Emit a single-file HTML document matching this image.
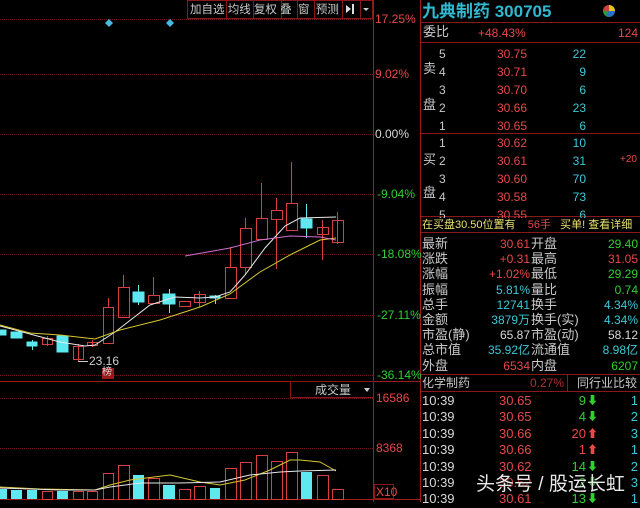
<!DOCTYPE html>
<html><head><meta charset="utf-8"><style>
*{margin:0;padding:0;box-sizing:border-box}
body{width:640px;height:502px;background:#000;overflow:hidden;position:relative;font-family:"Liberation Sans","Noto Sans CJK SC",sans-serif;font-size:12px;color:#c8c8c8}
.a{position:absolute;white-space:nowrap;line-height:14px}
.r{color:#e84848}.c{color:#3cc8d8}.g{color:#30d030}.w{color:#d8d8d8}.y{color:#e8e070}
.rt{text-align:right}
.hl{position:absolute;height:1px;background:#8a1818}
.vl{position:absolute;width:1px;background:#8a1818}
</style></head><body>
<svg width="640" height="502" style="position:absolute;left:0;top:0">
<g stroke="#6a1414" stroke-dasharray="1,1">
<line x1="0" y1="19.5" x2="373" y2="19.5"/><line x1="0" y1="74.5" x2="373" y2="74.5"/><line x1="0" y1="134.5" x2="373" y2="134.5"/><line x1="0" y1="194.5" x2="373" y2="194.5"/><line x1="0" y1="254.5" x2="373" y2="254.5"/><line x1="0" y1="315.5" x2="373" y2="315.5"/><line x1="0" y1="375.5" x2="373" y2="375.5"/><line x1="0" y1="398.5" x2="373" y2="398.5"/><line x1="0" y1="448.5" x2="373" y2="448.5"/>
</g>
<line x1="373.5" y1="0" x2="373.5" y2="502" stroke="#a01c1c"/>
<line x1="0" y1="381.5" x2="420" y2="381.5" stroke="#a01c1c"/>
<line x1="0" y1="499.5" x2="420" y2="499.5" stroke="#a01c1c"/>
<line x1="420.5" y1="0" x2="420.5" y2="502" stroke="#a01c1c"/>
<polygon points="109,19 113,23 109,27 105,23" fill="#4ab8e0"/>
<polygon points="170,19 174,23 170,27 166,23" fill="#4ab8e0"/>
<g stroke="#d84040" fill="none">
<line x1="47.5" y1="336" x2="47.5" y2="346"/><rect x="42.5" y="338.5" width="10" height="6"/>
<line x1="78.5" y1="344" x2="78.5" y2="361"/><rect x="73.5" y="346.5" width="10" height="13"/>
<line x1="92.5" y1="340" x2="92.5" y2="347"/><rect x="87.5" y="342.5" width="10" height="3"/>
<line x1="108.5" y1="298" x2="108.5" y2="307"/><rect x="103.5" y="307.5" width="10" height="36"/>
<line x1="123.5" y1="275" x2="123.5" y2="287"/><rect x="118.5" y="287.5" width="11" height="30"/>
<line x1="153.5" y1="277" x2="153.5" y2="295"/><rect x="148.5" y="295.5" width="11" height="8"/>
<rect x="179.5" y="301.5" width="11" height="5"/>
<line x1="199.5" y1="291" x2="199.5" y2="307"/><rect x="194.5" y="294.5" width="11" height="8"/>
<line x1="230.5" y1="247" x2="230.5" y2="267"/><rect x="225.5" y="267.5" width="11" height="31"/>
<line x1="245.5" y1="218" x2="245.5" y2="228"/><line x1="245.5" y1="267" x2="245.5" y2="275"/><rect x="240.5" y="228.5" width="11" height="39"/>
<line x1="261.5" y1="183" x2="261.5" y2="218"/><rect x="256.5" y="218.5" width="11" height="21"/>
<line x1="276.5" y1="198" x2="276.5" y2="210"/><line x1="276.5" y1="219" x2="276.5" y2="269"/><rect x="271.5" y="210.5" width="11" height="9"/>
<line x1="291.5" y1="162" x2="291.5" y2="203"/><rect x="286.5" y="203.5" width="11" height="27"/>
<line x1="322.5" y1="220" x2="322.5" y2="260"/><rect x="317.5" y="227.5" width="11" height="7"/>
<line x1="337.5" y1="212" x2="337.5" y2="244"/><rect x="332.5" y="220.5" width="11" height="22"/>
</g>
<g fill="#5ee8f0" stroke="#5ee8f0">
<rect x="0" y="330" width="6" height="5"/>
<rect x="11" y="332" width="11" height="6"/>
<line x1="32.5" y1="340" x2="32.5" y2="350"/><rect x="27" y="342" width="10" height="4"/>
<rect x="57" y="336" width="11" height="16"/>
<line x1="138.5" y1="285" x2="138.5" y2="305"/><rect x="133" y="292" width="11" height="10"/>
<line x1="169.5" y1="289" x2="169.5" y2="313"/><rect x="163" y="294" width="12" height="10"/>
<line x1="215.5" y1="295" x2="215.5" y2="304"/><rect x="210" y="296" width="10" height="2"/>
<line x1="306.5" y1="204" x2="306.5" y2="238"/><rect x="301" y="219" width="11" height="9"/>
</g>
<polyline fill="none" stroke="#e8e8e8" points="0,326 30,334 60,342 85,346 95,345 115,332 150,305 175,297 200,298 215,297 230,292 245,275 265,248 285,226 300,218 336,217"/>
<polyline fill="none" stroke="#d8c830" points="0,325 30,333 60,335 95,339 120,330 160,320 200,307 230,294 260,272 290,255 320,240 336,238"/>
<polyline fill="none" stroke="#d070d0" points="185,256 230,248 260,240 290,236 320,237 336,240"/>
<line x1="78" y1="361.5" x2="88" y2="361.5" stroke="#ccc"/>
<rect x="102" y="368" width="12" height="11" fill="#9a1818"/>
<g stroke="#d84040" fill="none">
<rect x="42.5" y="491.5" width="10" height="8"/><rect x="73.5" y="491.5" width="10" height="8"/><rect x="87.5" y="491.5" width="10" height="8"/><rect x="103.5" y="473.5" width="10" height="26"/><rect x="118.5" y="465.5" width="11" height="34"/><rect x="148.5" y="478.5" width="11" height="21"/><rect x="179.5" y="489.5" width="11" height="10"/><rect x="194.5" y="486.5" width="11" height="13"/><rect x="225.5" y="468.5" width="11" height="31"/><rect x="240.5" y="462.5" width="11" height="37"/><rect x="256.5" y="455.5" width="11" height="44"/><rect x="271.5" y="461.5" width="11" height="38"/><rect x="286.5" y="452.5" width="11" height="47"/><rect x="317.5" y="475.5" width="11" height="24"/><rect x="332.5" y="489.5" width="11" height="10"/>
</g>
<g fill="#5ee8f0">
<rect x="0" y="489" width="7" height="10"/><rect x="11" y="490" width="11" height="9"/><rect x="27" y="490" width="10" height="9"/><rect x="57" y="491" width="11" height="8"/><rect x="133" y="475" width="11" height="24"/><rect x="163" y="485" width="12" height="14"/><rect x="210" y="488" width="10" height="11"/><rect x="301" y="472" width="11" height="27"/>
</g>
<polyline fill="none" stroke="#d8c830" points="0,487 40,489 95,490 110,485 130,480 170,475 200,482 220,485 245,480 270,470 290,460 300,460 320,462 336,471"/>
<polyline fill="none" stroke="#e8e8e8" points="0,488 60,490 95,490 110,487 140,483 180,483 220,482 250,475 280,472 300,471 336,470"/>
<rect x="290.5" y="381.5" width="83" height="16" fill="none" stroke="#8a1818"/>
<polygon points="364,388 370,388 367,392" fill="#ccc"/>
<rect x="187.5" y="0.5" width="185" height="18" fill="none" stroke="#8a1818"/>
<g stroke="#8a1818"><line x1="226.5" y1="0" x2="226.5" y2="18"/><line x1="253.5" y1="0" x2="253.5" y2="18"/><line x1="281.5" y1="0" x2="281.5" y2="18"/><line x1="297.5" y1="0" x2="297.5" y2="18"/><line x1="314.5" y1="0" x2="314.5" y2="18"/><line x1="342.5" y1="0" x2="342.5" y2="18"/><line x1="360.5" y1="0" x2="360.5" y2="18"/></g>
<polygon points="346,5 351,9 346,13" fill="#ddd"/><rect x="352" y="4" width="2" height="10" fill="#ddd"/>
<polygon points="363,8 369,8 366,11" fill="#ccc"/>
<rect x="374.5" y="484.5" width="19" height="14" fill="none" stroke="#8a1818"/>
<!-- right panel lines -->
<g stroke="#8a1818">
<line x1="421" y1="22.5" x2="640" y2="22.5"/><line x1="421" y1="42.5" x2="640" y2="42.5"/><line x1="421" y1="133.5" x2="640" y2="133.5"/><line x1="421" y1="216.5" x2="640" y2="216.5"/><line x1="421" y1="232.5" x2="640" y2="232.5"/><line x1="421" y1="374.5" x2="640" y2="374.5"/><line x1="421" y1="391.5" x2="640" y2="391.5"/><line x1="567.5" y1="374" x2="567.5" y2="391"/>
</g>
<circle cx="609" cy="11" r="6" fill="#2a9a3a"/><path d="M609,11 L609,5 A6,6 0 0 1 615,11 Z" fill="#e8c020"/><path d="M609,11 L615,11 A6,6 0 0 1 606,16 Z" fill="#2a70d0"/><path d="M609,11 L603,11 A6,6 0 0 1 609,5Z" fill="#d04040"/>
</svg>

<div class="a" style="left:190px;top:3px;font-size:11.5px;word-spacing:0">加自选&nbsp;均线&nbsp;复权&nbsp;叠&nbsp;&nbsp;窗&nbsp;&nbsp;预测</div>
<div class="a r" style="left:375px;top:12px">17.25%</div>
<div class="a r" style="left:375px;top:67px">9.02%</div>
<div class="a w" style="left:375px;top:127px">0.00%</div>
<div class="a g" style="left:377px;top:187px">-9.04%</div>
<div class="a g" style="left:377px;top:247px">-18.08%</div>
<div class="a g" style="left:377px;top:308px">-27.11%</div>
<div class="a g" style="left:377px;top:368px">-36.14%</div>
<div class="a r" style="left:376px;top:391px">16586</div>
<div class="a r" style="left:376px;top:441px">8368</div>
<div class="a r" style="left:376px;top:485px">X10</div>
<div class="a" style="left:315px;top:383px">成交量</div>
<div class="a" style="left:89px;top:354px;color:#ccc">23.16</div>
<div class="a w" style="left:102px;top:366px;font-size:10px">榜</div>

<div class="a c" style="left:422px;top:2px;font-size:17px;line-height:19px;font-weight:bold;color:#30b8d0">九典制药 300705</div>
<div class="a" style="left:423px;top:25px;font-size:13px">委比</div>
<div class="a r" style="left:478px;top:26px">+48.43%</div>
<div class="a r rt" style="left:590px;top:26px;width:48px">124</div>
<div class="a" style="left:423px;top:62px;font-size:13px">卖</div>
<div class="a" style="left:423px;top:98px;font-size:13px">盘</div>
<div class="a" style="left:423px;top:153px;font-size:13px">买</div>
<div class="a" style="left:423px;top:186px;font-size:13px">盘</div>
<div class="a" style="left:439px;top:45px;line-height:18px">5<br>4<br>3<br>2<br>1</div>
<div class="a r" style="left:497px;top:45px;line-height:18px">30.75<br>30.71<br>30.70<br>30.66<br>30.65</div>
<div class="a c rt" style="left:560px;top:45px;width:26px;line-height:18px">22<br>9<br>6<br>23<br>6</div>
<div class="a" style="left:439px;top:134px;line-height:18px">1<br>2<br>3<br>4<br>5</div>
<div class="a r" style="left:497px;top:134px;line-height:18px">30.62<br>30.61<br>30.60<br>30.58<br>30.55</div>
<div class="a c rt" style="left:560px;top:134px;width:26px;line-height:18px">10<br>31<br>70<br>73<br>6</div>
<div class="a r" style="left:620px;top:153px;font-size:10px">+20</div>
<div class="a y" style="left:422px;top:218px;font-size:11px;background:#000;width:218px">在买盘30.50位置有&nbsp;&nbsp;&nbsp;&nbsp;<span class="r">56手</span>&nbsp;&nbsp;&nbsp;买单!&nbsp;查看详细</div>

<div class="a" style="left:422px;top:236px;line-height:15.2px;font-size:13px">最新<br>涨跌<br>涨幅<br>振幅<br>总手<br>金额<br>市盈(静)<br>总市值<br>外盘</div>
<div class="a rt" style="left:470px;top:237px;width:60px;line-height:15.2px"><span class="r">30.61</span><br><span class="r">+0.31</span><br><span class="r">+1.02%</span><br><span class="c">5.81%</span><br><span class="c">12741</span><br><span class="c">3879万</span><br><span class="w">65.87</span><br><span class="c">35.92亿</span><br><span class="r">6534</span></div>
<div class="a" style="left:531px;top:236px;line-height:15.2px;font-size:13px">开盘<br>最高<br>最低<br>量比<br>换手<br>换手(实)<br>市盈(动)<br>流通值<br>内盘</div>
<div class="a rt" style="left:580px;top:237px;width:58px;line-height:15.2px"><span class="g">29.40</span><br><span class="r">31.05</span><br><span class="g">29.29</span><br><span class="g">0.74</span><br><span class="c">4.34%</span><br><span class="c">4.34%</span><br><span class="w">58.12</span><br><span class="c">8.98亿</span><br><span class="g">6207</span></div>
<div class="a" style="left:422px;top:376px">化学制药</div>
<div class="a r" style="left:530px;top:376px;color:#b03030">0.27%</div>
<div class="a" style="left:577px;top:376px">同行业比较</div>
<div class="a w" style="left:422px;top:393px;line-height:16.4px;font-size:13px">10:39<br>10:39<br>10:39<br>10:39<br>10:39<br>10:39<br>10:39</div>
<div class="a r" style="left:499px;top:393px;line-height:16.4px;font-size:13px">30.65<br>30.65<br>30.66<br>30.66<br>30.62<br>30.62<br>30.61</div>
<div class="a rt" style="left:560px;top:393px;width:26px;line-height:16.4px;font-size:13px"><span class="g">9</span><br><span class="g">4</span><br><span class="r">20</span><br><span class="r">1</span><br><span class="g">14</span><br><span class="g">2</span><br><span class="g">13</span></div>
<div class="a" style="left:587px;top:393px;line-height:16.4px;font-size:11px"><span class="g">⬇</span><br><span class="g">⬇</span><br><span class="r">⬆</span><br><span class="r">⬆</span><br><span class="g">⬇</span><br><span class="g">⬇</span><br><span class="g">⬇</span></div>
<div class="a c rt" style="left:620px;top:393px;width:18px;line-height:16.4px;font-size:13px">1<br>2<br>3<br>1<br>2<br>3<br>1</div>
<div class="a" style="left:476px;top:474px;font-size:19px;line-height:22px;color:#e8e8e8;text-shadow:0 0 2px #000">头条号 / 股运长虹</div>
</body></html>
